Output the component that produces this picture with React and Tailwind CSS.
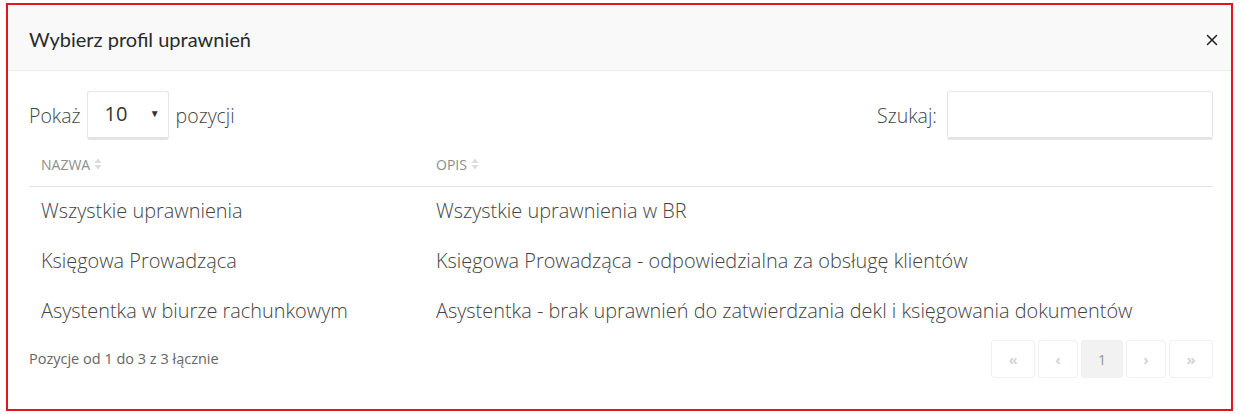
import { X } from 'lucide-react'

const rows = [
  ['Wszystkie uprawnienia', 'Wszystkie uprawnienia w BR'],
  ['Księgowa Prowadząca', 'Księgowa Prowadząca - odpowiedzialna za obsługę klientów'],
  ['Asystentka w biurze rachunkowym', 'Asystentka - brak uprawnień do zatwierdzania dekl i księgowania dokumentów'],
]

function SortIcon() {
  return (
    <svg width="8" height="12" viewBox="0 0 8 12" className="ml-[4px]">
      <path d="M4 0.5 L7.5 5 H0.5 Z" fill="#dcdcdc" />
      <path d="M4 11.5 L7.5 7 H0.5 Z" fill="#dcdcdc" />
    </svg>
  )
}

function PageBtn({ children, active, w }) {
  return (
    <div
      className={`flex h-[38px] ${w} items-center justify-center rounded-[3px] border border-[#f0f0f0] text-[15px] ${
        active ? 'bg-[#f2f2f2] text-[#8a9bb0]' : 'bg-white font-bold text-[#d4d4d4]'
      }`}
    >
      {children}
    </div>
  )
}

export default function App() {
  return (
    <div className="h-[414px] w-[1239px] bg-white pl-[6px] pt-[3px] font-['Open_Sans',sans-serif]">
      <div className="flex h-[408px] w-[1227px] flex-col border-2 border-[#e3141b]">
        <div className="flex h-[66px] items-center justify-between border-b border-[#ececec] bg-[#f9f9f9] pl-[21px] pr-[10px]">
          <h1 className="pt-[2px] font-['Lato',sans-serif] text-[20px] font-normal text-[#2a2a2a]">
            Wybierz profil uprawnień
          </h1>
          <X size={18} strokeWidth={2} className="mt-[4px] text-[#222]" />
        </div>

        <div className="flex flex-1 flex-col pl-[21px] pr-[18px] pt-[20px]">
          <div className="flex items-center justify-between">
            <div className="flex items-center text-[19.5px] font-light text-[#444]">
              <span className="mr-[6px]">Pokaż</span>
              <div className="flex h-[49px] w-[82px] shrink-0 items-center justify-between rounded-[3px] border border-[#e6e6e6] border-b-[3px] border-b-[#e4e4e4] pl-[17px] pr-[8px] pb-[2px]">
                <span className="text-[20px] font-normal text-[#333]">10</span>
                <span className="text-[10px] text-[#333]">▼</span>
              </div>
              <span className="ml-[7px]">pozycji</span>
            </div>
            <div className="flex items-center text-[19.5px] font-light text-[#444]">
              <span className="mr-[10px]">Szukaj:</span>
              <div className="h-[49px] w-[266px] shrink-0 rounded-[3px] border border-[#e6e6e6] border-b-[3px] border-b-[#e4e4e4]" />
            </div>
          </div>

          <table className="mt-[1px] w-full border-collapse">
            <thead>
              <tr className="h-[45px] border-b border-[#e4e4e4] text-left">
                <th className="w-[407px] pl-[12px] pt-[2px] text-[14px] font-normal text-[#8e8e8e]">
                  <span className="flex items-center">NAZWA<SortIcon /></span>
                </th>
                <th className="pl-0 pt-[2px] text-[14px] font-normal text-[#8e8e8e]">
                  <span className="flex items-center">OPIS<SortIcon /></span>
                </th>
              </tr>
            </thead>
            <tbody>
              {rows.map(([name, desc]) => (
                <tr key={name} className="h-[50px] text-[19.9px] font-light text-[#444]">
                  <td className="pl-[12px]">{name}</td>
                  <td>{desc}</td>
                </tr>
              ))}
            </tbody>
          </table>

          <div className="mt-[4px] flex items-center justify-between">
            <span className="text-[14.5px] text-[#666]">Pozycje od 1 do 3 z 3 łącznie</span>
            <div className="flex gap-[3px]">
              <PageBtn w="w-[44px]">«</PageBtn>
              <PageBtn w="w-[40px]">‹</PageBtn>
              <PageBtn w="w-[42px]" active>1</PageBtn>
              <PageBtn w="w-[40px]">›</PageBtn>
              <PageBtn w="w-[44px]">»</PageBtn>
            </div>
          </div>
        </div>
      </div>
    </div>
  )
}
